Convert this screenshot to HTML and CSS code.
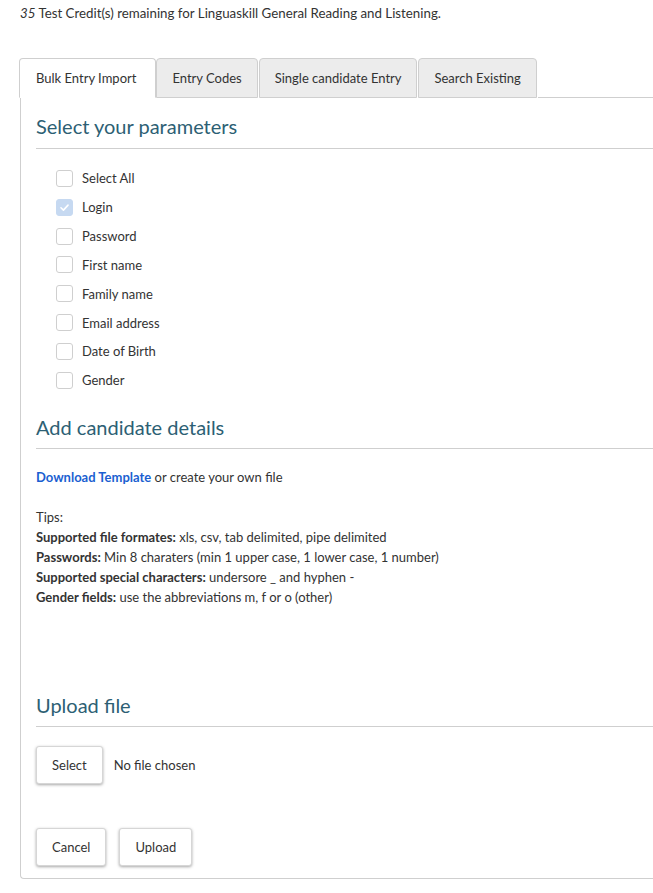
FILE: index.html
```html
<!DOCTYPE html>
<html lang="en">
<head>
<meta charset="utf-8">
<title>Bulk Entry Import</title>
<link rel="stylesheet" href="styles.css">
</head>
<body>
<p class="credits"><em>35</em> Test Credit(s) remaining for Linguaskill General Reading and Listening.</p>

<div class="tabs">
  <div class="tab active">Bulk Entry Import</div>
  <div class="tab">Entry Codes</div>
  <div class="tab">Single candidate Entry</div>
  <div class="tab">Search Existing</div>
  <div class="tab-fill"></div>
</div>

<div class="panel">
  <h2 class="section-title first">Select your parameters</h2>
  <ul class="params">
    <li class="param"><span class="box"></span>Select All</li>
    <li class="param"><span class="box checked"><svg viewBox="0 0 17 17" width="17" height="17"><path d="M4.5 8.8 L7.3 11.5 L12.5 5.8" fill="none" stroke="#fff" stroke-width="1.8" stroke-linecap="round" stroke-linejoin="round"/></svg></span>Login</li>
    <li class="param"><span class="box"></span>Password</li>
    <li class="param"><span class="box"></span>First name</li>
    <li class="param"><span class="box"></span>Family name</li>
    <li class="param"><span class="box"></span>Email address</li>
    <li class="param"><span class="box"></span>Date of Birth</li>
    <li class="param"><span class="box"></span>Gender</li>
  </ul>

  <h2 class="section-title second">Add candidate details</h2>
  <p class="download"><a class="link" href="#">Download Template</a> or create your own file</p>
  <div class="tips">
    <div>Tips:</div>
    <div><b>Supported file formates:</b> xls, csv, tab delimited, pipe delimited</div>
    <div><b>Passwords:</b> Min 8 charaters (min 1 upper case, 1 lower case, 1 number)</div>
    <div><b>Supported special characters:</b> undersore _ and hyphen -</div>
    <div><b>Gender fields:</b> use the abbreviations m, f or o (other)</div>
  </div>

  <h2 class="section-title third">Upload file</h2>
  <div class="file-row">
    <button class="btn" type="button">Select</button>
    <span class="file-name">No file chosen</span>
  </div>
  <div class="actions">
    <button class="btn btn-cancel" type="button">Cancel</button>
    <button class="btn btn-upload" type="button">Upload</button>
  </div>
</div>
</body>
</html>
```

FILE: styles.css
```css
* { box-sizing: border-box; }

body {
  margin: 0;
  font-family: Lato, "Liberation Sans", sans-serif;
  font-size: 13px;
  color: #333;
  background: #fff;
  width: 653px;
  overflow: hidden;
}

.credits {
  margin: 5px 20px 0;
  line-height: 16px;
  font-size: 13.3px;
}

.tabs {
  display: flex;
  margin: 37px 0 0 19px;
  height: 40px;
}

.tab {
  height: 40px;
  display: flex;
  align-items: center;
  padding: 0 15px;
  background: #ececec;
  border: 1px solid #cfcfcf;
  border-radius: 4px 4px 0 0;
  margin-right: 1px;
  font-size: 13px;
  color: #333;
  white-space: nowrap;
}

.tab.active {
  background: #fff;
  border-bottom-color: #fff;
  padding: 0 19px 0 16px;
  margin-right: 0;
}

.tab-fill {
  flex: 1;
  border-bottom: 1px solid #cfcfcf;
}

.panel {
  margin-left: 20px;
  border-left: 1px solid #cfcfcf;
  border-bottom: 1px solid #cfcfcf;
  border-radius: 0 0 0 4px;
  padding: 16px 0 12px 15px;
}

.section-title {
  margin: 0;
  font-size: 20px;
  line-height: 24px;
  font-weight: 400;
  color: #2d5f74;
  padding-bottom: 9px;
  border-bottom: 1px solid #cfcfcf;
}

.section-title.first { padding-bottom: 10px; }

.params {
  list-style: none;
  margin: 15px 0 0;
  padding: 0 0 0 20px;
}

.param {
  display: flex;
  align-items: center;
  height: 28.85px;
}

.box {
  width: 17px;
  height: 17px;
  border: 1px solid #cfcfcf;
  border-radius: 3px;
  margin-right: 9px;
  display: flex;
  align-items: center;
  justify-content: center;
  background: #fff;
}

.box.checked {
  background: #c6d9f1;
  border-color: #c6d9f1;
}

.box svg { display: block; }

.section-title.second { margin-top: 20px; }

.download {
  margin: 18px 0 0;
  line-height: 20px;
}

.link {
  color: #1b5fd1;
  font-weight: 700;
  text-decoration: none;
}

.tips {
  margin-top: 20px;
  line-height: 20px;
}

.tips b { font-weight: 700; }

.section-title.third { margin-top: 86px; }

.file-row {
  display: flex;
  align-items: center;
  margin-top: 19px;
}

.btn {
  height: 38px;
  padding: 0 15px;
  font-family: inherit;
  font-size: 13px;
  color: #333;
  background: #fff;
  border: 1px solid #d6d6d6;
  border-radius: 3px;
  box-shadow: 0 1px 3px rgba(0, 0, 0, 0.35);
}

.file-name { margin-left: 11px; }

.actions {
  display: flex;
  gap: 13px;
  margin-top: 44px;
}
```
